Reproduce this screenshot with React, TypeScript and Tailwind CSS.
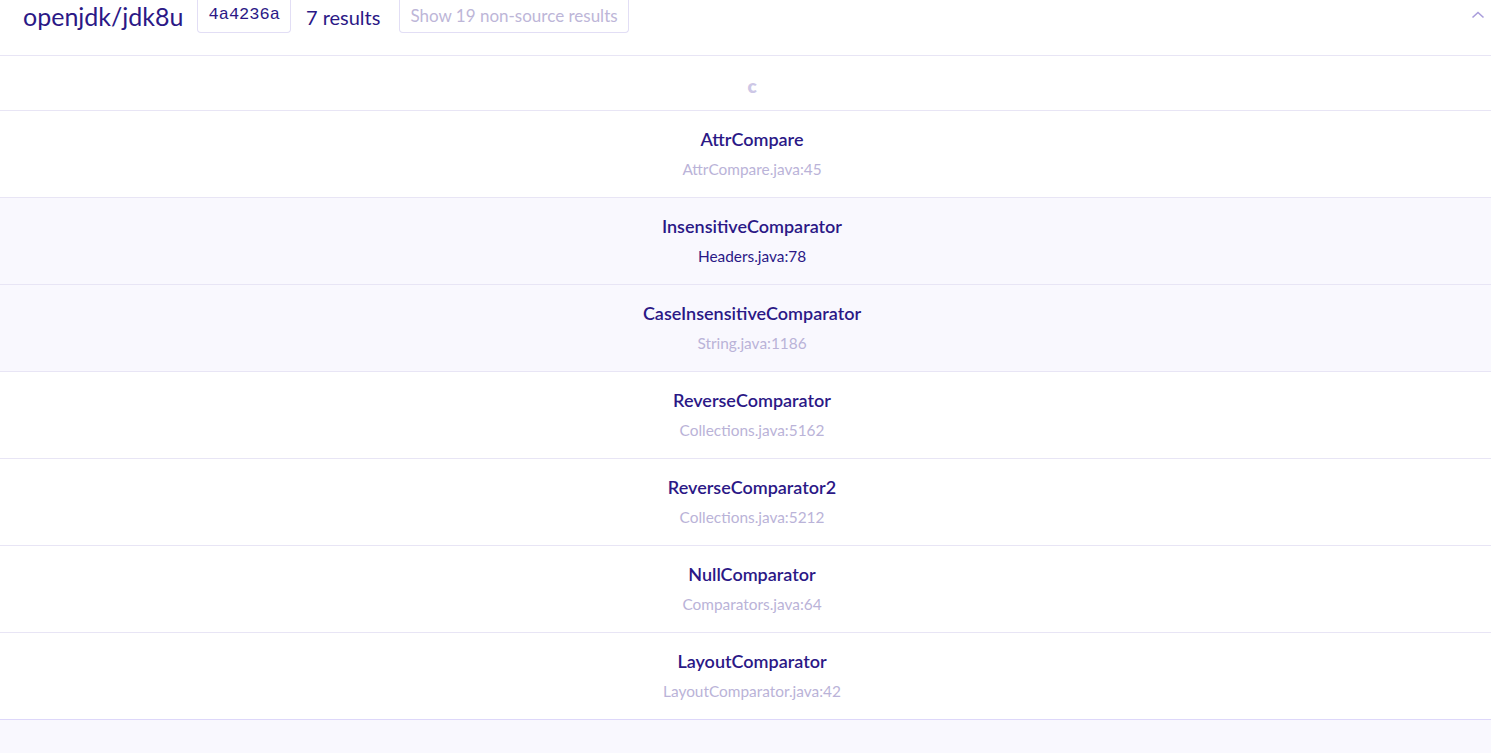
const results = [
  { name: "AttrCompare", file: "AttrCompare.java:45" },
  { name: "InsensitiveComparator", file: "Headers.java:78", tint: true, active: true },
  { name: "CaseInsensitiveComparator", file: "String.java:1186", tint: true },
  { name: "ReverseComparator", file: "Collections.java:5162" },
  { name: "ReverseComparator2", file: "Collections.java:5212" },
  { name: "NullComparator", file: "Comparators.java:64" },
  { name: "LayoutComparator", file: "LayoutComparator.java:42" },
];

export default function App() {
  return (
    <main className="min-h-screen bg-[#f9f8fe] font-['Lato',sans-serif] text-[#2b1886]">
      <div className="bg-white">
        <header className="flex h-[56px] items-start border-b border-[#e8e5f5] pl-[23px] pr-[6px]">
          <h1 className="mt-[1px] text-[25px] leading-[31px] text-[#2b1886]">openjdk/jdk8u</h1>
          <span className="ml-[14px] flex h-[33px] items-center rounded-b-[4px] border border-t-0 border-[#e2def5] px-[10px] pb-[3px] font-['Liberation_Mono',monospace] text-[17px] text-[#2b1886]">
            4a4236a
          </span>
          <span className="ml-[15px] mt-[5px] text-[20px] leading-[24px]">7 results</span>
          <button className="ml-[19px] flex h-[33px] items-center rounded-b-[4px] border border-t-0 border-[#e2def5] px-[10px] pb-[1px] text-[17px] text-[#bdb6d8]">
            Show 19 non-source results
          </button>
          <div className="ml-auto mt-[10px] text-[#a99ddb]">
            <svg width="14" height="10" viewBox="0 0 14 10" fill="none" stroke="currentColor" strokeWidth="1.6">
              <path d="M1.5 7.5 L7 2.5 L12.5 7.5" />
            </svg>
          </div>
        </header>

        <div className="flex h-[55px] items-center justify-center border-b border-[#e8e5f5] pl-[13px] pt-[6px] text-[19px] font-extrabold text-[#cdc7e6]">
          c
        </div>

        <ul>
          {results.map((r, i) => (
            <li
              key={r.name}
              className={`flex h-[87px] flex-col items-center border-b pl-[13px] pt-[16px] ${
                i === results.length - 1 ? "border-[#ddd7fa]" : "border-[#e8e5f5]"
              } ${r.tint ? "bg-[#f9f8fe]" : "bg-white"}`}
            >
              <span className="text-[18px] font-semibold leading-[24px] text-[#2b1886]">{r.name}</span>
              <span
                className={`mt-[8px] text-[15.4px] leading-[20px] ${
                  r.active ? "text-[#2b1886]" : "text-[#bab3d8]"
                }`}
              >
                {r.file}
              </span>
            </li>
          ))}
        </ul>
      </div>
    </main>
  );
}
